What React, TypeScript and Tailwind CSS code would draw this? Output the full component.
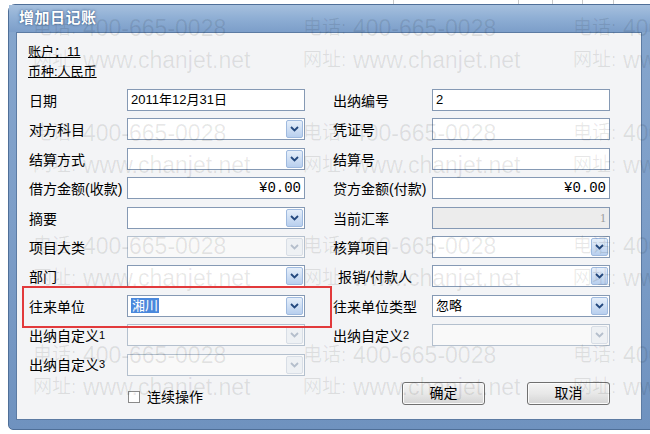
import type { ReactNode } from 'react';

type Kind = 'text' | 'combo' | 'money' | 'off' | 'rate';

interface Field {
	label: ReactNode;
	kind: Kind;
	value?: string;
	picked?: boolean;
	indent?: boolean;
}

const sans = "font-['Liberation_Sans','Noto_Sans_CJK_SC',sans-serif]";

const small = (n: string) => <span className="relative -top-[2px] text-[11px]">{n}</span>;

const left: Field[] = [
	{ label: '日期', kind: 'text', value: '2011年12月31日' },
	{ label: '对方科目', kind: 'combo' },
	{ label: '结算方式', kind: 'combo' },
	{ label: '借方金额(收款)', kind: 'money', value: '¥0.00' },
	{ label: '摘要', kind: 'combo' },
	{ label: '项目大类', kind: 'off' },
	{ label: '部门', kind: 'combo' },
	{ label: '往来单位', kind: 'combo', value: '湘川', picked: true },
	{ label: <>出纳自定义{small('1')}</>, kind: 'off' },
	{ label: <>出纳自定义{small('3')}</>, kind: 'off' },
];

const right: (Field | null)[] = [
	{ label: '出纳编号', kind: 'text', value: '2' },
	{ label: '凭证号', kind: 'text' },
	{ label: '结算号', kind: 'text' },
	{ label: '贷方金额(付款)', kind: 'money', value: '¥0.00' },
	{ label: '当前汇率', kind: 'rate', value: '1' },
	{ label: '核算项目', kind: 'combo' },
	{ label: '报销/付款人', kind: 'combo', indent: true },
	{ label: '往来单位类型', kind: 'combo', value: '忽略' },
	{ label: <>出纳自定义{small('2')}</>, kind: 'off' },
	null,
];

// watermark rows (top of first line) and columns (left of each copy)
const markRows = [14, 119, 232, 341];
const markCols = [33, 303, 573];

const Chevron = ({ off }: { off?: boolean }) => (
	<svg width="9" height="6" viewBox="0 0 9 6">
		<path d="M1 1 L4.5 4.5 L8 1" stroke={off ? '#b5bfcc' : '#23487e'} strokeWidth="1.8" fill="none" />
	</svg>
);

const Box = ({ f }: { f: Field }) => {
	const off = f.kind === 'off';
	const combo = f.kind === 'combo' || off;
	const base = `flex h-[22px] w-[178px] items-center border ${off ? 'border-[#b4c0ce] bg-[#f9f9f9]' : 'border-[#8599b4]'}`;
	const bg = f.kind === 'rate' ? 'bg-[#ececec]' : off ? '' : 'bg-white';

	return (
		<div className={`${base} ${bg}`}>
			<div
				className={`flex h-full flex-1 items-center px-[3px] text-[13px] ${
					f.kind === 'money' || f.kind === 'rate' ? 'justify-end' : ''
				}`}
			>
				{f.kind === 'money' ? (
					<span className="font-['Liberation_Mono',monospace] text-[14px] text-black">{f.value}</span>
				) : f.kind === 'rate' ? (
					<span className="font-['Liberation_Serif',serif] text-[12px] text-[#9a9a9a]">{f.value}</span>
				) : f.picked ? (
					<span className="bg-[#4a88dc] px-[1px] leading-[15px] text-white">{f.value}</span>
				) : (
					<span className="text-black">{f.value}</span>
				)}
			</div>
			{combo && (
				<div
					className={`mr-[1px] flex h-[18px] w-[17px] items-center justify-center rounded-[2px] border ${
						off
							? 'border-[#d8dee6] bg-[#eef1f4]'
							: 'border-[#9fbadf] bg-gradient-to-b from-[#e6effa] to-[#b8cfee]'
					}`}
				>
					<Chevron off={off} />
				</div>
			)}
		</div>
	);
};

const Cell = ({ f, labelW }: { f: Field | null; labelW: string }) => {
	if (!f) return <div />;
	return (
		<div className="flex h-[22px] items-center">
			<div className={`${labelW} ${f.indent ? 'pl-[5px]' : ''} pt-[2px] text-[14px] leading-[20px] text-black`}>
				{f.label}
			</div>
			<Box f={f} />
		</div>
	);
};

const Button = ({ children }: { children: ReactNode }) => (
	<div className="flex h-[23px] w-[83px] items-center justify-center rounded-[3px] border border-[#707070] bg-gradient-to-b from-[#f4f4f4] via-[#e8e8e8] to-[#d4d4d4] text-[14px] text-black shadow-[inset_0_0_0_1px_#fbfbfb]">
		{children}
	</div>
);

const Mark = ({ tag, text }: { tag: string; text: string }) => (
	<div className="flex h-[28px] items-center">
		<span className="w-[50px] text-[19px]">{tag}</span>
		<span className="text-[23px]">{text}</span>
	</div>
);

const App = () => {
	return (
		<div className={`relative h-[434px] w-[650px] overflow-hidden bg-white ${sans}`}>
			{/* background table peeking above the window */}
			<div className="flex h-[4px]">
				<div className="w-[393px]" />
				<div className="w-[125px] border-l border-[#c8c8c8]" />
				<div className="w-[34px] border-l border-[#c8c8c8]" />
				<div className="w-[30px] border-l border-[#c8c8c8]" />
				<div className="w-[31px] border-l border-[#c8c8c8]" />
				<div className="flex-1 border-l border-[#c8c8c8]" />
			</div>

			{/* window */}
			<div className="ml-[8px] flex h-[426px] w-[660px] flex-col rounded-t-[7px] rounded-b-[5px] border border-[#4f6f98] bg-gradient-to-b from-[#86a6cd] via-[#7d9ec8] to-[#6f92bf]">
				<div className="flex h-[27px] items-center bg-gradient-to-b from-[#a6c0de] via-[#8eaed4] to-[#7c9ec9] px-[10px]">
					<span className="text-[15px] font-bold tracking-[0.5px] text-white [text-shadow:0_0_3px_#3d5f8c,0_0_1px_#3d5f8c]">
						增加日记账
					</span>
				</div>

				<div className="ml-[7px] h-[388px] w-[626px] border border-[#5c7ba3] bg-[#f3f4f6]">
					<div className="pl-[11px] pt-[9px] text-[13px] leading-[20px] text-black">
						<div className="underline">账户：11</div>
						<div className="underline">币种:人民币</div>
					</div>

					<div className="mt-[7px] grid grid-cols-[304px_300px] gap-y-[7.4px] pl-[12px]">
						{left.map((f, i) => (
							<div key={i} className="contents">
								<Cell f={f} labelW="w-[98px]" />
								<Cell f={right[i]} labelW="w-[99px]" />
							</div>
						))}
					</div>

					<div className="mt-[6px] grid grid-cols-[304px_300px] pl-[12px]">
						<div className="flex h-[23px] items-center pl-[99px] pt-[8px]">
							<div className="h-[12px] w-[12px] border border-[#8a8a8a] bg-white" />
							<span className="ml-[7px] text-[14px] text-black">连续操作</span>
						</div>
						<div className="flex gap-[42px] pl-[69px]">
							<Button>确定</Button>
							<Button>取消</Button>
						</div>
					</div>
				</div>
			</div>

			{/* watermark */}
			<div className="pointer-events-none absolute inset-0 text-[rgba(0,0,0,0.09)]">
				{markRows.map((y) =>
					markCols.map((x) => (
						<div key={`${x}-${y}`} className="absolute whitespace-nowrap" style={{ left: x, top: y }}>
							<Mark tag="电话:" text="400-665-0028" />
							<div className="mt-[4px]">
								<Mark tag="网址:" text="www.chanjet.net" />
							</div>
						</div>
					)),
				)}
			</div>

			{/* red annotation box */}
			<div className="pointer-events-none absolute left-[22px] top-[286px] h-[42px] w-[310px] border-2 border-[#e23a3c]" />
		</div>
	);
};

export default App;
